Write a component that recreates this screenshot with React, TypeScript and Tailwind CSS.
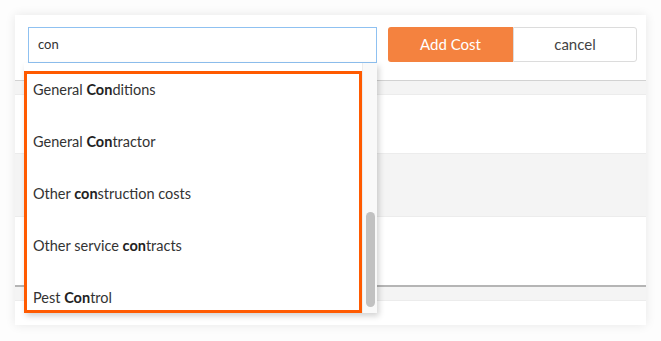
import React from 'react';

const items: [string, string, string][] = [
  ['General ', 'Con', 'ditions'],
  ['General ', 'Con', 'tractor'],
  ['Other ', 'con', 'struction costs'],
  ['Other service ', 'con', 'tracts'],
  ['Pest ', 'Con', 'trol'],
];

export default function App() {
  return (
    <div className="w-[661px] h-[341px] bg-[#fdfdfd] pt-[15px] pl-[15px] font-['Lato','Liberation_Sans',sans-serif]">
      <div className="relative w-[631px] h-[310px] bg-white shadow-[0_0_10px_rgba(0,0,0,0.09)] flex flex-col">
        {/* top bar */}
        <div className="h-[65px] flex items-start pt-[12px] pl-[13px] shrink-0">
          <div className="w-[349px] h-[36px] border border-[#8fc1f1] flex items-center pl-[9px] text-[13px] text-[#333]">
            con
          </div>
          <button className="ml-[11px] w-[125px] h-[35px] bg-[#f4823f] rounded-l-[3px] text-white text-[15px]">
            Add Cost
          </button>
          <button className="w-[124px] h-[35px] border border-[#dcdcdc] rounded-r-[3px] bg-white text-[#444] text-[15px]">
            cancel
          </button>
        </div>

        {/* table rows behind */}
        <div className="border-t border-[#d2d2d2] h-[15px] bg-[#f4f4f4] border-b border-b-[#ececec] shrink-0" />
        <div className="h-[58px] bg-white shrink-0" />
        <div className="h-[64px] bg-[#f4f4f4] border-y border-[#ececec] shrink-0" />
        <div className="h-[68px] bg-white shrink-0" />
        <div className="h-[16px] bg-[#f4f4f4] border-t-2 border-[#b5b5b5] border-b border-b-[#ececec] shrink-0" />
        <div className="flex-1 bg-white" />

        {/* autocomplete dropdown */}
        <div className="absolute left-[9px] top-[48px] w-[353px] h-[250px] bg-white shadow-[2px_3px_6px_rgba(0,0,0,0.18)] flex">
          <div className="flex-1 overflow-hidden">
            {items.map(([a, b, c]) => (
              <div key={a + c} className="h-[52px] flex items-center pl-[9px] text-[14.5px] text-[#333] shrink-0 first:mt-[1px]">
                <span>
                  {a}
                  <b className="font-bold text-[#222]">{b}</b>
                  {c}
                </span>
              </div>
            ))}
          </div>
          <div className="w-[15px] bg-[#f9f9f9] border-l border-[#ececec] relative">
            <div className="absolute left-[3px] top-[149px] w-[9px] h-[95px] rounded-full bg-[#c1c1c1]" />
          </div>
          {/* highlight annotation */}
          <div className="absolute left-0 top-[8px] w-[338px] h-[242px] border-[3px] border-[#ff5a00] pointer-events-none" />
        </div>
      </div>
    </div>
  );
}
